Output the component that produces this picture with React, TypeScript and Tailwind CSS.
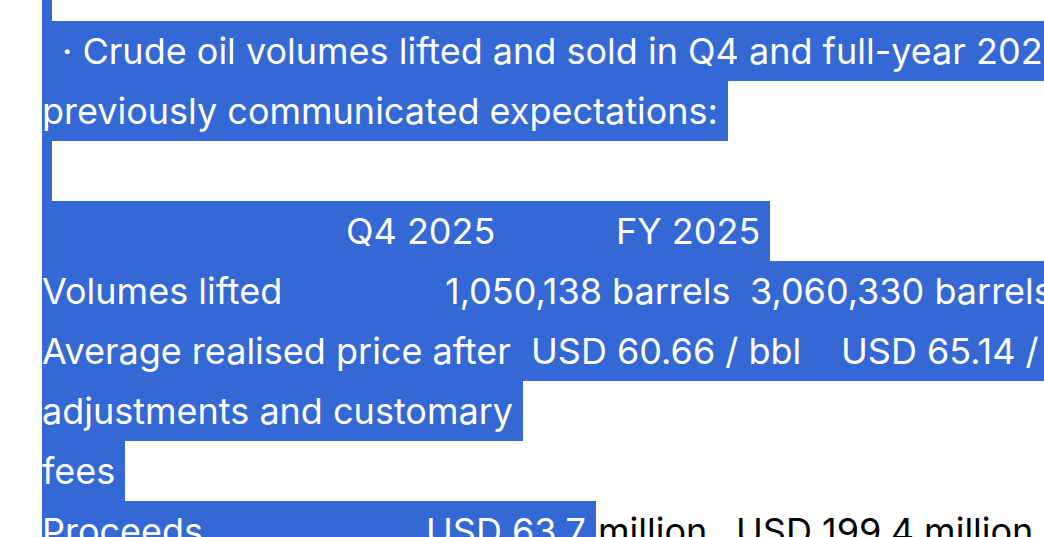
const font = { fontFamily: "Inter, 'Noto Sans', sans-serif" }

const sel = 'bg-[#3468d4] text-white'

export default function App() {
  return (
    <div
      className="w-[1044px] h-[537px] overflow-hidden bg-white text-black text-[36px] leading-[60px] whitespace-pre pl-[42px]"
      style={font}
    >
      {/* tail of the previous selected line */}
      <div className={`h-[21px] w-[10px] ${sel}`} />

      <div className={`h-[60px] pl-[20px] ${sel}`}>
        · Crude oil volumes lifted and sold in Q4 and full-year 2025 were in line with
      </div>

      <div className="h-[60px] flex">
        <span className={`w-[686px] ${sel}`}>previously communicated expectations:</span>
      </div>

      <div className={`h-[60px] w-[10px] ${sel}`} />

      <div className="h-[60px] flex">
        <div className={`w-[728px] flex ${sel}`}>
          <span className="w-[304px]" />
          <span className="w-[270px]">Q4 2025</span>
          <span>FY 2025</span>
        </div>
      </div>

      <div className={`h-[60px] flex ${sel}`}>
        <span className="w-[403px] shrink-0">Volumes lifted</span>
        <span className="w-[305px] shrink-0">1,050,138 barrels</span>
        <span>3,060,330 barrels</span>
      </div>

      <div className={`h-[60px] flex ${sel}`}>
        <span className="w-[489px] shrink-0">Average realised price after</span>
        <span className="w-[310px] shrink-0">USD 60.66 / bbl</span>
        <span>USD 65.14 / bbl</span>
      </div>

      <div className="h-[60px] flex">
        <span className={`w-[481px] ${sel}`}>adjustments and customary</span>
      </div>

      <div className="h-[60px] flex">
        <span className={`w-[83px] ${sel}`}>fees</span>
      </div>

      <div className="h-[60px] flex">
        <div className={`w-[554px] flex ${sel}`}>
          <span className="w-[384px] shrink-0">Proceeds</span>
          <span>USD 63.7</span>
        </div>
        <span className="w-[140px] shrink-0 pl-[2px]">million</span>
        <span>USD 199.4 million</span>
      </div>
    </div>
  )
}
